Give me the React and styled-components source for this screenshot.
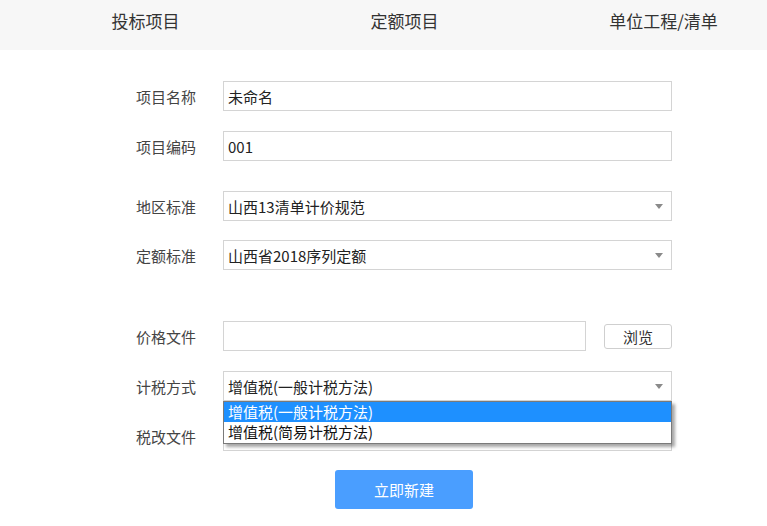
import React from "react";
import styled, { createGlobalStyle } from "styled-components";

const Global = createGlobalStyle`
  html, body { margin: 0; padding: 0; background: #fff; }
  body { font-family: "Microsoft YaHei", "Noto Sans CJK SC", "Noto Sans", sans-serif; }
  * { box-sizing: border-box; }
`;

const Page = styled.div`
  width: 767px;
  height: 526px;
  overflow: hidden;
  background: #fff;
`;

const Header = styled.div`
  height: 50px;
  background: #f7f7f7;
  display: flex;
  padding-left: 16px;
  overflow: hidden;
`;

const Tab = styled.div`
  flex: 0 0 259px;
  text-align: center;
  font-size: 17px;
  color: #333;
  line-height: 22px;
  padding-top: 10px;
`;

const Form = styled.div`
  padding: 31px 0 0 136px;
  width: 672px;
`;

const Row = styled.div`
  display: flex;
  align-items: center;
  height: 30px;
  margin-top: ${(p) => p.$mt || 0}px;
  position: relative;
`;

const Label = styled.div`
  width: 87px;
  flex: 0 0 87px;
  font-size: 15px;
  color: #444;
`;

const Field = styled.div`
  flex: 1;
  height: 30px;
  border: 1px solid #d4d4d4;
  display: flex;
  align-items: center;
  padding-left: 4px;
  font-size: 15px;
  color: #222;
  position: relative;
  background: #fff;
`;

const Arrow = styled.span`
  position: absolute;
  right: 8px;
  top: 12px;
  width: 0;
  height: 0;
  border-left: 4px solid transparent;
  border-right: 4px solid transparent;
  border-top: 5px solid #8a8a8a;
`;

const Browse = styled.button`
  margin-left: 18px;
  flex: 0 0 68px;
  height: 25px;
  border: 1px solid #cfcfcf;
  border-radius: 3px;
  background: #fff;
  font-family: inherit;
  font-size: 15px;
  line-height: 1;
  color: #333;
  padding: 0;
`;

const Dropdown = styled.div`
  position: absolute;
  left: 87px;
  right: 0;
  top: 30px;
  border: 1px solid #7a7a7a;
  background: #fff;
  box-shadow: 3px 3px 3px rgba(0, 0, 0, 0.35);
  z-index: 5;
  padding: 0 0 1px;
`;

const Option = styled.div`
  height: 20px;
  line-height: 20px;
  padding-left: 4px;
  font-size: 15px;
  color: ${(p) => (p.$active ? "#fff" : "#111")};
  background: ${(p) => (p.$active ? "#1e90ff" : "#fff")};
`;

const Submit = styled.button`
  display: block;
  margin: 19px 0 0 199px;
  width: 138px;
  height: 39px;
  border: none;
  border-radius: 3px;
  background: #4a9eff;
  color: #fff;
  font-family: inherit;
  font-size: 15px;
`;

export default function App() {
  return (
    <Page>
      <Global />
      <Header>
        <Tab>投标项目</Tab>
        <Tab>定额项目</Tab>
        <Tab>单位工程/清单</Tab>
      </Header>
      <Form>
        <Row>
          <Label>项目名称</Label>
          <Field>未命名</Field>
        </Row>
        <Row $mt={20}>
          <Label>项目编码</Label>
          <Field>001</Field>
        </Row>
        <Row $mt={30}>
          <Label>地区标准</Label>
          <Field>
            山西13清单计价规范
            <Arrow />
          </Field>
        </Row>
        <Row $mt={19}>
          <Label>定额标准</Label>
          <Field>
            山西省2018序列定额
            <Arrow />
          </Field>
        </Row>
        <Row $mt={51}>
          <Label>价格文件</Label>
          <Field />
          <Browse>浏览</Browse>
        </Row>
        <Row $mt={20}>
          <Label>计税方式</Label>
          <Field>
            增值税(一般计税方法)
            <Arrow />
          </Field>
          <Dropdown>
            <Option $active>增值税(一般计税方法)</Option>
            <Option>增值税(简易计税方法)</Option>
          </Dropdown>
        </Row>
        <Row $mt={20}>
          <Label>税改文件</Label>
          <Field />
        </Row>
        <Submit>立即新建</Submit>
      </Form>
    </Page>
  );
}
